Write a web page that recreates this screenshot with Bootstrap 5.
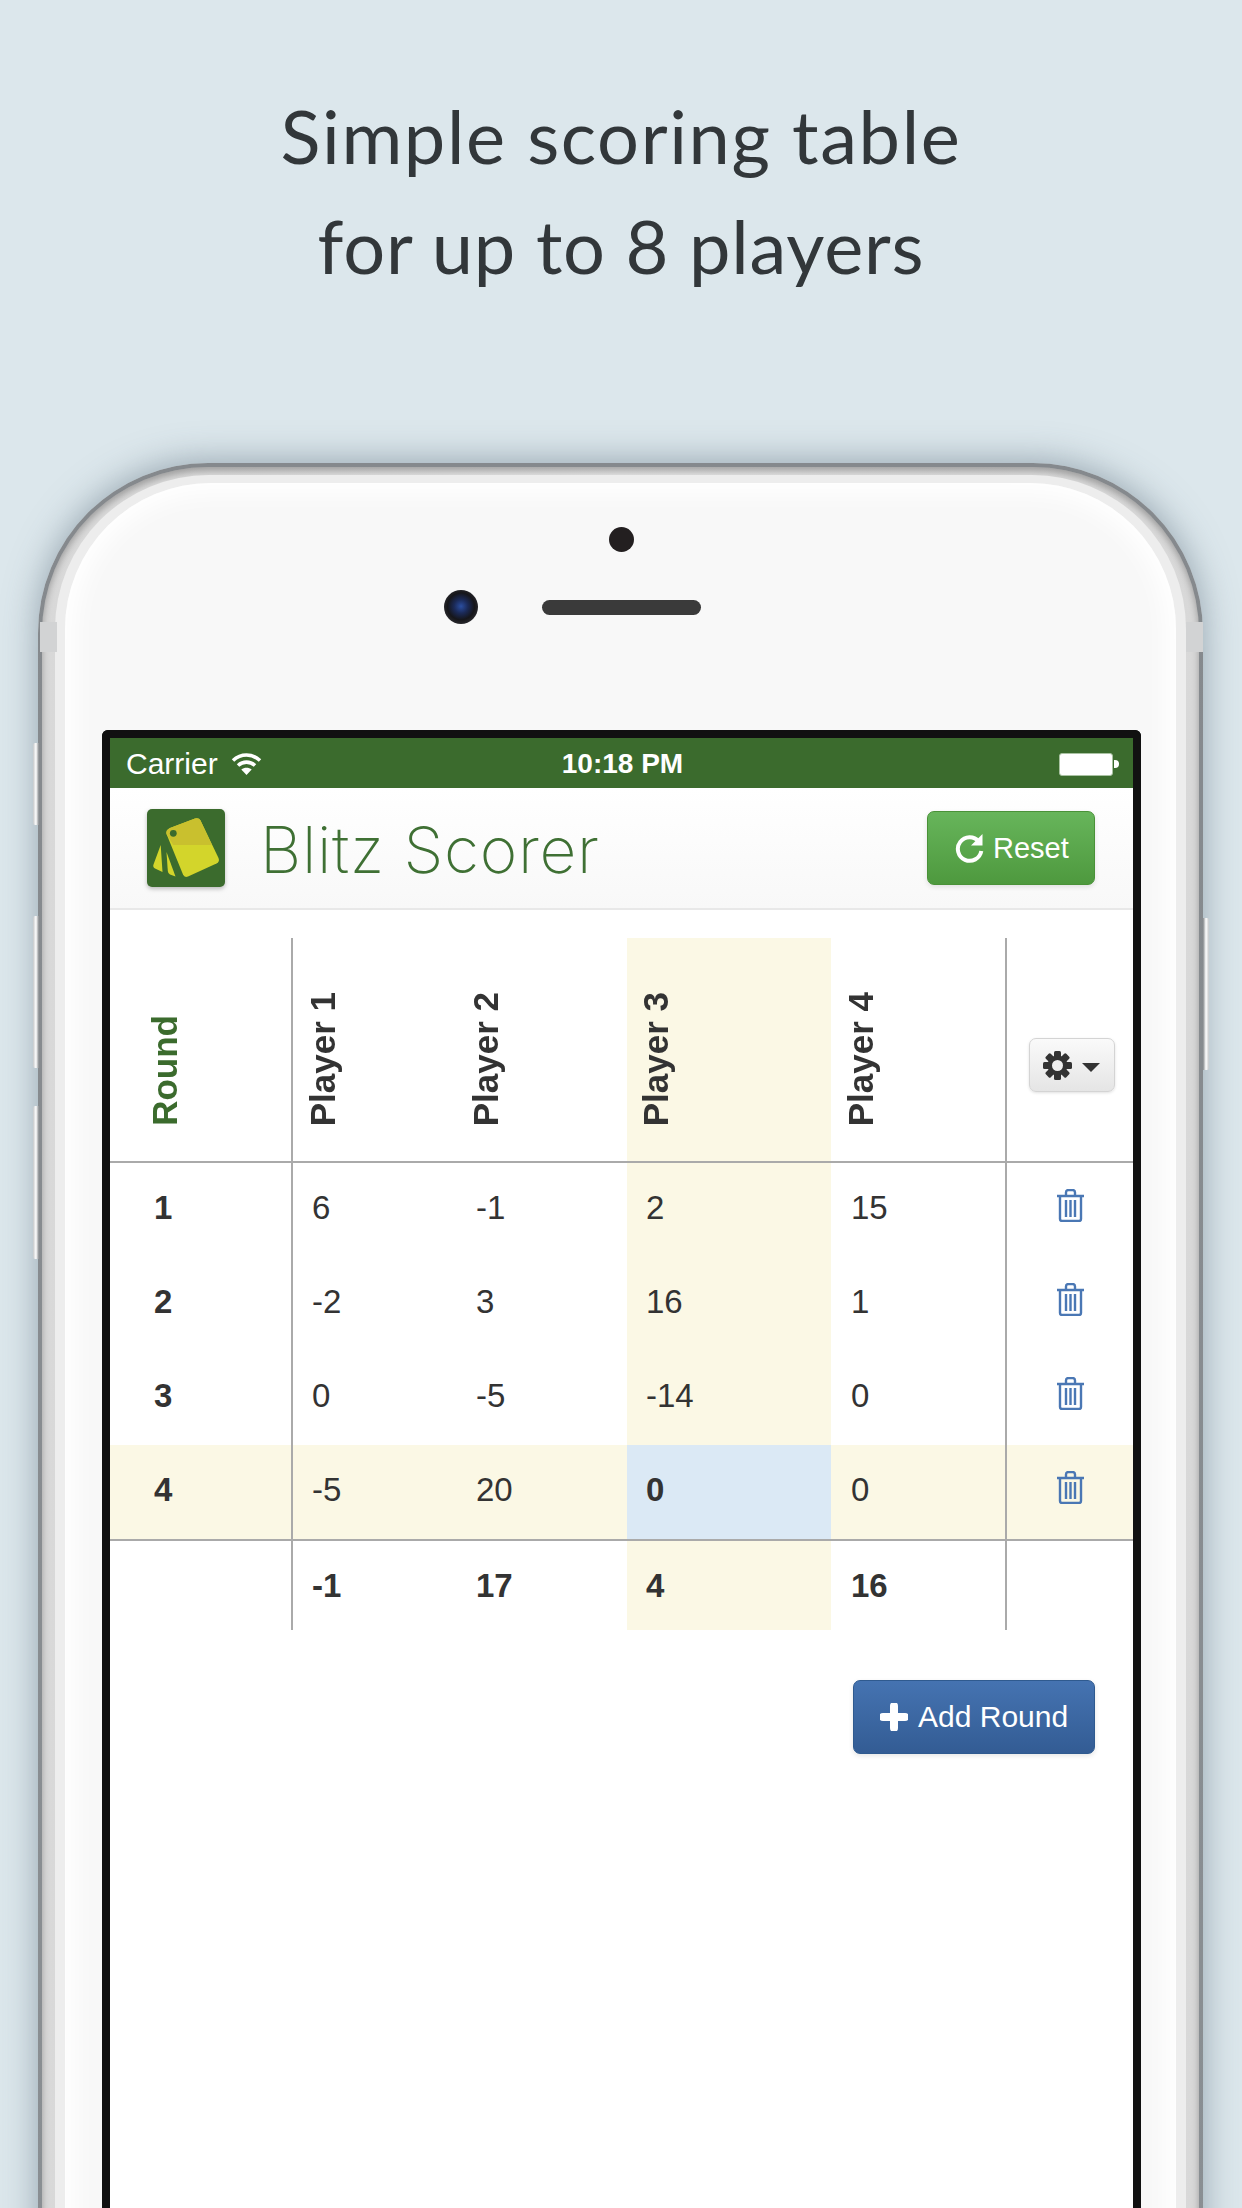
<!DOCTYPE html>
<html lang="en">
<head>
  <meta charset="UTF-8">
  <title>Blitz Scorer</title>
  <link href="https://cdn.jsdelivr.net/npm/bootstrap@5.3.0/dist/css/bootstrap.min.css" rel="stylesheet">
  <style>
    html, body { height: 2208px; overflow: hidden; }
    body { margin: 0; background: #dce7ec; font-family: "Liberation Sans", Arial, sans-serif; color: #333; }

    /* Headline above the phone */
    .hero { height: 463px; padding-top: 81px; font-family: "Lato", "Noto Sans", sans-serif; font-size: 74px; line-height: 110px; letter-spacing: 1.6px; color: #32373a; text-align: center; }
    .hero-line { letter-spacing: .8px; }

    /* Phone body */
    .phone-shell { position: relative; width: 1165px; margin-left: 38px; height: 1800px; padding: 4px 4px 0; border-radius: 170px 170px 0 0; background: linear-gradient(#85898d, #8a8f93); box-shadow: 0 -2px 34px rgba(80, 100, 115, .5); }
    .phone-band { height: 100%; padding: 8px 13px 0; border-radius: 166px 166px 0 0; background: linear-gradient(90deg, #d8d8d8, #e2e2e2 50%, #d8d8d8); box-shadow: inset 0 4px 7px rgba(0, 0, 0, .28); }
    .phone-rim { height: 100%; padding: 8px 10px 0; border-radius: 154px 154px 0 0; background: #ededed; }
    .phone-face { height: 100%; padding: 44px 35px 0 37px; border-radius: 146px 146px 0 0; background: #f8f8f8; box-shadow: inset 0 0 24px 10px #fff; }
    .antenna { position: absolute; top: 159px; width: 17px; height: 30px; background: #d2d3d4; }
    .antenna-l { left: 2px; }
    .antenna-r { right: 0; }
    .side-key { position: absolute; width: 6px; border-radius: 2px 0 0 2px; background: linear-gradient(90deg, #c4c7c9, #fff 50%, #85898c); }
    .key-a { left: -5px; top: 280px; height: 82px; }
    .key-b { left: -5px; top: 453px; height: 152px; }
    .key-c { left: -5px; top: 643px; height: 153px; }
    .key-d { right: -6px; top: 455px; height: 152px; transform: scaleX(-1); }

    .cam-dot { width: 25px; height: 25px; margin: 0 auto; border-radius: 50%; background: #231f20; }
    .cam-row { display: grid; grid-template-columns: 1fr auto 1fr; align-items: center; margin: 38px 0 106px; }
    .cam-lens { justify-self: end; width: 34px; height: 34px; margin-right: 64px; border-radius: 50%; background: radial-gradient(circle at 50% 48%, #2b4ea0 0, #1b2a58 28%, #16161a 55%, #44444a 100%); }
    .cam-speaker { width: 159px; height: 15px; border-radius: 8px; background: #3a3a3a; }

    /* Screen */
    .phone-screen { height: 1500px; border: 8px solid #111; border-bottom: 0; border-radius: 6px 6px 0 0; background: #fff; }
    .status-strip { height: 50px; padding: 2px 14px 0 16px; background: #3b6b2d; color: #fff; font-size: 30px; line-height: 48px; }
    .status-time { font-size: 28px; font-weight: 700; }
    .batt-shell { width: 54px; height: 23px; border: 1px solid #a9c2a2; border-radius: 3px; background: #fff; }
    .batt-nub { width: 5px; height: 8px; margin-left: 1px; border-radius: 0 4px 4px 0; background: #fff; }

    .app-bar { height: 122px; padding: 0 38px 0 37px; background: linear-gradient(#fff, #f8f8f8); border-bottom: 2px solid #e8e8e8; }
    .app-logo { display: block; width: 78px; height: 78px; filter: drop-shadow(0 2px 2px rgba(0, 0, 0, .25)); }
    .app-title { margin-left: 35px; padding: 4px 0 0; font-family: "Inter", "Liberation Sans", sans-serif; font-size: 64px; font-weight: 200; letter-spacing: .7px; line-height: 1; color: #3f7034; }
    .btn.btn-reset, .btn.btn-add { display: flex; align-items: center; height: 74px; font-size: 30px; line-height: 1; color: #fff; border-radius: 7px; box-shadow: 0 2px 5px rgba(0, 0, 0, .1); }
    .btn.btn-reset { gap: 9px; width: 168px; padding: 0 0 0 27px; font-size: 29px; border: 1px solid #4a9238; background: linear-gradient(#67b55b, #4e993e); }
    .btn.btn-add { gap: 10px; width: 242px; padding: 0 0 0 26px; border: 1px solid #2f5a8f; background: linear-gradient(#4573b1, #335c94); }

    /* Score table */
    .score-wrap { padding-top: 28px; }
    .table.score-table { width: 1023px; margin: 0; table-layout: fixed; border-collapse: separate; border-spacing: 0; --bs-table-bg: transparent; --bs-table-color: #333; font-size: 33px; line-height: 1; }
    .score-table th, .score-table td { padding: 0 0 0 19px; border: 0; vertical-align: middle; }
    .score-table tbody td, .score-table tbody th { height: 94px; padding-bottom: 6px; }
    .score-table thead th { height: 225px; padding-bottom: 30px; vertical-align: bottom; border-bottom: 2px solid #aaa; font-size: 35px; }
    .score-table tfoot td { height: 91px; border-top: 2px solid #aaa; font-weight: 700; }
    .score-table .first-col { padding-left: 44px; font-weight: 700; }
    .score-table thead .first-col { padding-left: 37px; color: #3b6b2d; }
    .score-table thead .head-p1 { padding-left: 12px; }
    .score-table thead .head-p2 { padding-left: 10px; }
    .score-table thead .head-p3 { padding-left: 11px; }
    .score-table thead .head-p4 { padding-left: 12px; }
    .score-table .rule-col { border-left: 2px solid #aaa; }
    .score-table tbody .icon-col { padding: 0 0 10px 1px; text-align: center; }
    .score-table thead .icon-col { padding: 0 0 69px 3px; text-align: center; }
    .score-table .hi-col, .score-table .hi-row > * { background: #fbf8e5; }
    .score-table .hi-row .now-cell { background: #dbe9f5; font-weight: 700; }
    .score-table .pad-p2 { padding-left: 18px; }
    .score-table .pad-p4 { padding-left: 20px; }
    .side-text { display: inline-block; writing-mode: vertical-rl; transform: rotate(180deg); line-height: 36px; white-space: nowrap; }
    .btn.btn-gear { display: inline-flex; align-items: center; gap: 10px; width: 86px; height: 54px; padding: 0 0 0 13px; border: 1px solid #d4d4d4; border-radius: 7px; background: linear-gradient(#fafafa, #e5e5e5); box-shadow: 0 1px 3px rgba(0, 0, 0, .12); color: #333; font-size: 32px; }
    .btn.btn-gear::after { margin: 4px 0 0; border-top-color: #333; }
    .trash-ico { display: block; margin: 0 auto; }
    .add-row { margin-top: 50px; padding-right: 38px; }
  </style>
</head>
<body>
  <div class="hero">Simple scoring table<br><span class="hero-line">for up to 8 players</span></div>

  <div class="phone-shell">
    <div class="side-key key-a"></div>
    <div class="side-key key-b"></div>
    <div class="side-key key-c"></div>
    <div class="side-key key-d"></div>
    <div class="phone-band">
      <div class="phone-rim">
        <div class="phone-face">
          <div class="cam-dot"></div>
          <div class="cam-row">
            <div class="cam-lens"></div>
            <div class="cam-speaker"></div>
          </div>

          <div class="phone-screen">
            <!-- iOS status bar -->
            <div class="status-strip d-flex align-items-center justify-content-between">
              <div class="d-flex align-items-center" style="width: 300px; gap: 13px">
                <span>Carrier</span>
                <svg width="31" height="24" viewBox="0 0 31 24" fill="none" stroke="#fff" stroke-width="3.6">
                  <path d="M2 8.500C10 1.200 21 1.200 29 8.500"/>
                  <path d="M7 13.500C12 9 19 9 24 13.500"/>
                  <path d="M15.500 23l-5.200-5.400c3-2.400 7.400-2.400 10.400 0z" fill="#fff" stroke="none"/>
                </svg>
              </div>
              <span class="status-time">10:18 PM</span>
              <div class="d-flex align-items-center justify-content-end" style="width: 300px">
                <div class="batt-shell"></div>
                <div class="batt-nub"></div>
              </div>
            </div>

            <!-- App header -->
            <nav class="navbar app-bar flex-nowrap">
              <div class="d-flex align-items-center">
                <svg class="app-logo" viewBox="0 0 78 78">
                  <rect width="78" height="78" rx="5" fill="#3b6b2d"/>
                  <path d="M13.700 36 15.500 63 8 59.500Q5.500 58 6.500 55.500z" fill="#d3d52b"/>
                  <path d="M19.500 43 28.500 67.500 23 65.500Q21 64.500 20.800 62z" fill="#d3d52b"/>
                  <path d="M23 19 48 9.500Q52 8.500 53.500 11.500L71.500 49Q73 52.500 69.500 54.500L41 67.500Q37.500 69 36 65.500L19.500 25Q18.500 21 23 19z" fill="#d3d52b"/>
                  <path d="M23 19 48 9.500Q52 8.500 53.500 11.500L65 36H26.200L19.500 25Q18.500 21 23 19z" fill="#c9c02e"/>
                  <circle cx="26.300" cy="24.300" r="3.400" fill="#3b6b2d"/>
                </svg>
                <span class="navbar-brand app-title">Blitz Scorer</span>
              </div>
              <button class="btn btn-reset" type="button">
                <svg width="29" height="30" viewBox="0 0 29 30" fill="none">
                  <path d="M23.800 8.500A11.800 11.800 0 1 0 26.300 18" stroke="#fff" stroke-width="4"/>
                  <path d="M27.500 1V12.500H16z" fill="#fff"/>
                </svg>
                <span>Reset</span>
              </button>
            </nav>

            <!-- Scores -->
            <div class="score-wrap">
              <table class="table score-table">
                <colgroup>
                  <col style="width: 181px"><col style="width: 167px"><col style="width: 169px">
                  <col style="width: 204px"><col style="width: 174px"><col style="width: 128px">
                </colgroup>
                <thead>
                  <tr>
                    <th class="first-col"><span class="side-text">Round</span></th>
                    <th class="rule-col head-p1"><span class="side-text">Player 1</span></th>
                    <th class="head-p2"><span class="side-text">Player 2</span></th>
                    <th class="hi-col head-p3"><span class="side-text">Player 3</span></th>
                    <th class="head-p4"><span class="side-text">Player 4</span></th>
                    <th class="rule-col icon-col align-bottom">
                      <button class="btn btn-gear dropdown-toggle" type="button">
                        <svg width="29" height="29" viewBox="0 0 29 29">
                          <g fill="#333">
                            <rect x="11" y="0" width="7" height="29" rx="1.500"/>
                            <rect x="11" y="0" width="7" height="29" rx="1.500" transform="rotate(45 14.500 14.500)"/>
                            <rect x="11" y="0" width="7" height="29" rx="1.500" transform="rotate(90 14.500 14.500)"/>
                            <rect x="11" y="0" width="7" height="29" rx="1.500" transform="rotate(135 14.500 14.500)"/>
                          </g>
                          <circle cx="14.500" cy="14.500" r="7.500" fill="none" stroke="#333" stroke-width="5"/>
                          <circle cx="14.500" cy="14.500" r="5.500" fill="#efefef"/>
                        </svg>
                      </button>
                    </th>
                  </tr>
                </thead>
                <tbody>
                  <tr>
                    <td class="first-col">1</td><td class="rule-col">6</td><td class="pad-p2">-1</td><td class="hi-col">2</td><td class="pad-p4">15</td>
                    <td class="rule-col icon-col"><svg class="trash-ico" width="27" height="33" viewBox="0 0 27 33" fill="none" stroke="#4a77b4" stroke-width="2.400"><path d="M0 7H27M9 7V3.500Q9 1 11.500 1H15.500Q18 1 18 3.500V7"/><path d="M3 7V30Q3 32 5 32H22Q24 32 24 30V7M9 11V28M13.500 11V28M18 11V28"/></svg></td>
                  </tr>
                  <tr>
                    <td class="first-col">2</td><td class="rule-col">-2</td><td class="pad-p2">3</td><td class="hi-col">16</td><td class="pad-p4">1</td>
                    <td class="rule-col icon-col"><svg class="trash-ico" width="27" height="33" viewBox="0 0 27 33" fill="none" stroke="#4a77b4" stroke-width="2.400"><path d="M0 7H27M9 7V3.500Q9 1 11.500 1H15.500Q18 1 18 3.500V7"/><path d="M3 7V30Q3 32 5 32H22Q24 32 24 30V7M9 11V28M13.500 11V28M18 11V28"/></svg></td>
                  </tr>
                  <tr>
                    <td class="first-col">3</td><td class="rule-col">0</td><td class="pad-p2">-5</td><td class="hi-col">-14</td><td class="pad-p4">0</td>
                    <td class="rule-col icon-col"><svg class="trash-ico" width="27" height="33" viewBox="0 0 27 33" fill="none" stroke="#4a77b4" stroke-width="2.400"><path d="M0 7H27M9 7V3.500Q9 1 11.500 1H15.500Q18 1 18 3.500V7"/><path d="M3 7V30Q3 32 5 32H22Q24 32 24 30V7M9 11V28M13.500 11V28M18 11V28"/></svg></td>
                  </tr>
                  <tr class="hi-row">
                    <td class="first-col">4</td><td class="rule-col">-5</td><td class="pad-p2">20</td><td class="now-cell">0</td><td class="pad-p4">0</td>
                    <td class="rule-col icon-col"><svg class="trash-ico" width="27" height="33" viewBox="0 0 27 33" fill="none" stroke="#4a77b4" stroke-width="2.400"><path d="M0 7H27M9 7V3.500Q9 1 11.500 1H15.500Q18 1 18 3.500V7"/><path d="M3 7V30Q3 32 5 32H22Q24 32 24 30V7M9 11V28M13.500 11V28M18 11V28"/></svg></td>
                  </tr>
                </tbody>
                <tfoot>
                  <tr>
                    <td class="first-col"></td><td class="rule-col">-1</td><td class="pad-p2">17</td><td class="hi-col">4</td><td class="pad-p4">16</td><td class="rule-col"></td>
                  </tr>
                </tfoot>
              </table>
              <div class="d-flex justify-content-end add-row">
                <button class="btn btn-add" type="button">
                  <svg width="28" height="28" viewBox="0 0 28 28"><path d="M14 3V25M3 14H25" stroke="#fff" stroke-width="8" stroke-linecap="round" stroke-linejoin="round"/></svg>
                  <span>Add Round</span>
                </button>
              </div>
            </div>
          </div>
        </div>
      </div>
    </div>
    <div class="antenna antenna-l"></div>
    <div class="antenna antenna-r"></div>
  </div>

  <script src="https://cdn.jsdelivr.net/npm/bootstrap@5.3.0/dist/js/bootstrap.bundle.min.js"></script>
</body>
</html>
